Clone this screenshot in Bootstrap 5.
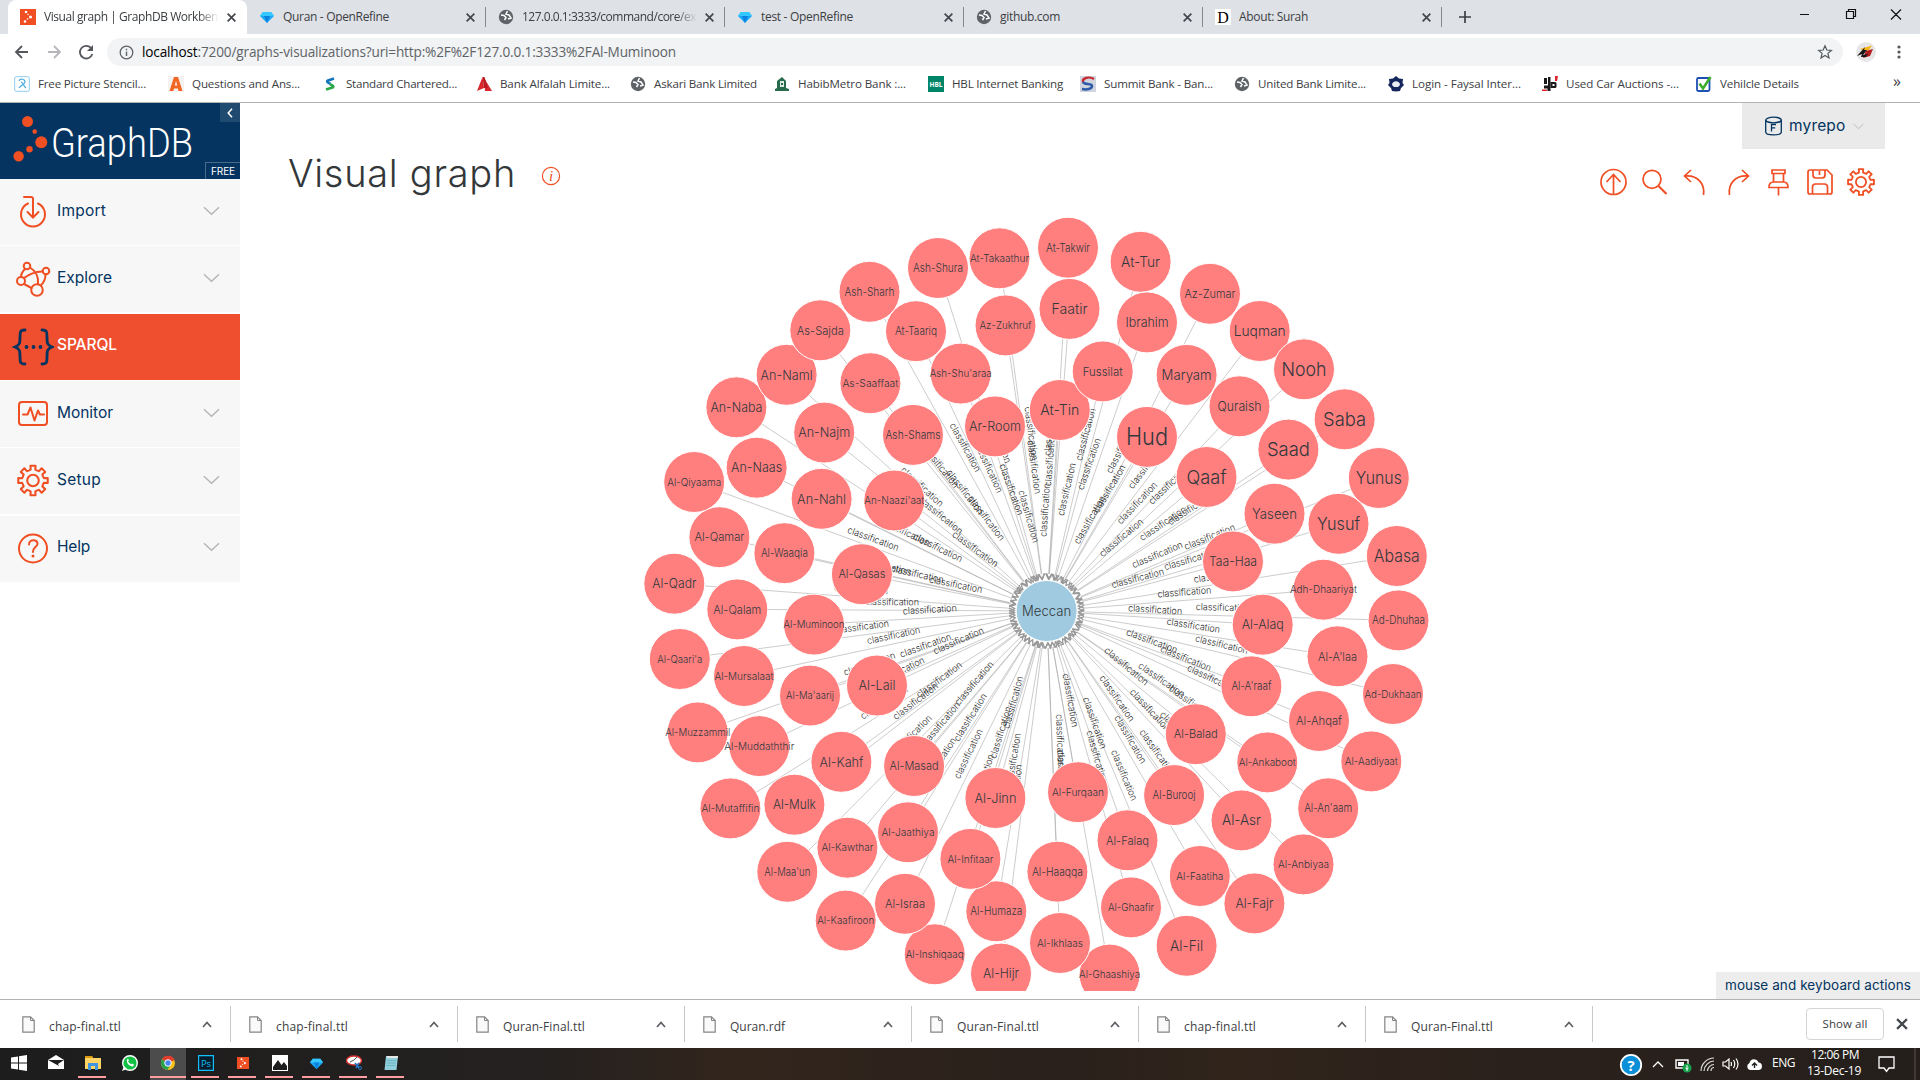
<!DOCTYPE html>
<html lang="en">
<head>
<meta charset="utf-8">
<title>Visual graph | GraphDB Workbench</title>
<link href="https://cdn.jsdelivr.net/npm/bootstrap@5.3.0/dist/css/bootstrap.min.css" rel="stylesheet">
<style>
html,body{height:1080px;overflow:hidden}
body{width:1920px;font-family:"Open Sans","Noto Sans",sans-serif;font-size:12px;line-height:1.2;color:#3c4043;background:#fff}
svg{display:block;flex:none}
.fit{white-space:nowrap;flex:none}
.tabstrip{height:34px;background:#dee1e6;padding-left:8px}
.tab-item{width:239px;padding-left:12px;position:relative}
.tab-item+.tab-item::after{content:"";position:absolute;right:0;top:7px;height:20px;border-right:1px solid #85898e}
.tab-item.on{background:#fff;border-radius:8px 8px 0 0}
.tab-title{width:175px;height:17px;overflow:hidden;margin-left:8px;padding-top:1px}
.tab-fade{-webkit-mask-image:linear-gradient(90deg,#000 88%,transparent)}
.omnirow{height:35px;padding:1px 10px 0 11px}
.omni{width:1736px;height:28px;border-radius:14px;background:#f1f3f4;padding:0 10px 0 8px;font-size:13.6px;color:#5f6368}
.bookmarks{height:34px;padding-left:14px;padding-bottom:3px;border-bottom:1px solid #b3b3b3;font-size:11.6px}
.bookmarks .fit{margin-left:8px}
.workbench{height:896px;font-family:Inter,Roboto,"Open Sans",sans-serif}
.side{width:240px}
.logo{height:76px;background:#04345f;position:relative}
.logo svg{overflow:visible}
.logo .collapser{position:absolute;right:0;top:0;width:20px;height:19px;background:#204b70}
.logo .edition{position:absolute;right:0;bottom:0;width:35px;height:17px;border:1px solid #4a6c8b;border-width:1px 0 0 1px;color:#fff;font-size:10px;line-height:17px;padding-left:5px}
.menu-item{height:66px;margin-bottom:1.35px;background:#f7f7f7;color:#04345f;font-size:15.5px;padding:0 20px 0 12px}
.menu-item .fit{margin-bottom:2px}
.menu-item.on{background:#ef4e2f;color:#fff;font-weight:500}
.page-title{font-size:38px;font-weight:300;color:#333739;line-height:46px}
.repo{width:143px;height:46px;background:#eaeaea;color:#04345f;font-size:15.5px;margin-right:35px;padding-left:22px}
.tools{margin:18px 42px 0 0}
.canvas-wrap{flex:1;position:relative}
.keys{position:absolute;right:0;bottom:0;width:204px;height:27px;background:#ededed;color:#04345f;font-size:13.5px;padding-left:9px}
.shelf{height:49px;border-top:1px solid #b3b3b3}
.dl{width:227px;height:36px;border-right:1px solid #c8c8c8;padding:0 18px 0 18px;font-size:12px}
.dl .fit{margin:6px auto 0 14px}
.showall{width:78px;height:32px;border:1px solid #d5d5d5;border-radius:4px;font-size:11.5px;color:#3c4043}
.taskbar{height:32px;background:linear-gradient(90deg,#1d1d1d 0,#242120 28%,#32251c 38%,#2a211c 55%,#30241b 64%,#2b211c 80%,#241f1c 100%);color:#fff}
.app-btn{width:37px;height:32px;position:relative}
.app-btn.run::after{content:"";position:absolute;left:4px;right:5px;bottom:2px;height:2px;background:#ff9da0}
.app-btn.front{background:#4d4c4c;width:36px;margin:0 1px 0 2px}
.app-btn.front::after{left:0;right:0}
.tray svg{position:absolute}
.tray{position:relative;width:310px;font-size:12px}
.tray span{position:absolute}
#graph text{text-anchor:middle;font-family:Inter,Roboto,"Open Sans",sans-serif;font-weight:300}
.lnk{stroke:#aaa;stroke-opacity:.6;stroke-width:1}
.tip{stroke:#999;fill:none;stroke-width:1.3}
.pred{font-size:9.6px;fill:#2b2b2b}
.disc{fill:#ff7f7f;stroke:#fff;stroke-width:1}
</style>
<script src="https://cdn.jsdelivr.net/npm/bootstrap@5.3.0/dist/js/bootstrap.bundle.min.js"></script>
</head>
<body class="d-flex flex-column">
<svg width="0" height="0" class="position-absolute">
<defs>
<symbol id="globe" viewBox="0 0 16 16"><circle cx="8" cy="8" r="7.2" fill="#5f6368"/><path d="M3 6l3 .5 2 2-1.500 2.500M9.500 2L8 5l3 1 2 3-3 1" fill="none" stroke="#fff" stroke-width="1.500"/></symbol>
<symbol id="gem" viewBox="0 0 16 16"><path d="M4 3h8l3 4-7 7-7-7z" fill="#1ba8f5"/><path d="M4 3h8l3 4H1z" fill="#35c8ff"/><path d="M8 14L5 7h6z" fill="#0b82e0"/></symbol>
<symbol id="dots" viewBox="0 0 16 16"><path fill="#f04e23" d="M0 0h16v16H0z"/><g fill="#fff"><circle cx="6" cy="3" r="1.300"/><circle cx="8" cy="5.500" r=".7"/><circle cx="10.500" cy="8" r="1.500"/><circle cx="7.500" cy="10" r=".8"/><circle cx="5" cy="12.500" r="1.300"/></g></symbol>
<symbol id="shut" viewBox="0 0 10 10"><path d="M1.500 1.500l7 7m0-7l-7 7" stroke="#45494d" stroke-width="1.600" fill="none"/></symbol>
<symbol id="dbp" viewBox="0 0 16 16"><path fill="#fff" d="M0 0h16v16H0z"/><text x="8" y="14" font-size="16" text-anchor="middle" font-family="Liberation Serif">D</text></symbol>
<symbol id="down" viewBox="0 0 18 10"><path d="M1 1l8 7.500L17 1" fill="none" stroke="#b3b3b3" stroke-width="1.400"/></symbol>
<symbol id="gear" viewBox="0 0 32 32"><path class="gearpath" fill="none" stroke="currentColor" stroke-width="2" stroke-linejoin="round"/><circle cx="16" cy="16" r="5.600" fill="none" stroke="currentColor" stroke-width="2"/></symbol>
<symbol id="b0" viewBox="0 0 16 16"><rect x=".7" y=".7" width="14.600" height="14.600" rx="1.500" fill="#fff" stroke="#8fcdec"/><path d="M5 5c1-3 6-2 6 1 0 2-4 3-6 6M7 6c3 1 2 4 5 6" fill="none" stroke="#49aede" stroke-width="1.200"/></symbol>
<symbol id="b1" viewBox="0 0 16 16"><rect width="16" height="16" fill="#f5f1ef"/><path d="M1.500 15L6 1h4l4.500 14h-4l-.6-2.500H6L5.400 15zM6.800 9.500h2.500L8 4.800z" fill="#f26522"/></symbol>
<symbol id="b2" viewBox="0 0 16 16"><path d="M12 2.500L6 4.500c-2 1 0 2.300 2.500 3.300" stroke="#1275bb" stroke-width="2.600" fill="none"/><path d="M4 13.500l6.500-2c2-1 0-2.300-2.500-3.300" stroke="#2aa84a" stroke-width="2.600" fill="none"/></symbol>
<symbol id="b3" viewBox="0 0 16 16"><path d="M6.500 1L1 15l7-3zM8 2l8 13H9z" fill="#d8262c"/><path d="M6.500 1h2L12 12l-4 0z" fill="#b91d22"/></symbol>
<symbol id="b5" viewBox="0 0 16 16"><path d="M3 5l5-4 4 4v7l3 1v2H1v-2l2-1z" fill="#276a4c"/><path d="M6 5h4v6H6z" fill="#dce9e2"/><path d="M7 7h2v2H7z" fill="#276a4c"/></symbol>
<symbol id="b6" viewBox="0 0 16 16"><path d="M0 0h16v16H0z" fill="#008568"/><text x="8" y="10.500" font-size="6.500" font-weight="700" fill="#fff" text-anchor="middle">HBL</text></symbol>
<symbol id="b7" viewBox="0 0 16 16"><path d="M0 0h16v16H0z" fill="#cfd4de"/><path d="M14 3C9 0 2 2 3 6" fill="none" stroke="#c9252b" stroke-width="2.200"/><path d="M3 6c1 3 9 1 9 4 0 3-5 4-10 3" fill="none" stroke="#2b5ba8" stroke-width="2.500"/></symbol>
<symbol id="b9" viewBox="0 0 16 16"><path d="M8 0l3 2.500 4 .5-.5 4L16 9l-3 3-1 3-4 .500-4-.500-1-3-3-3 1.500-2L1 3l4-.500z" fill="#14265c"/><path d="M4 9c0-5 8-5 8 0l-2 2H6z" fill="#e9ecf4"/></symbol>
<symbol id="b10" viewBox="0 0 16 16"><path d="M2 2h3v6H2zM6 1h2.500v14H5.500v-2.500H2V9.500h4z" fill="#191919"/><path d="M8.500 6H13q1.500 0 1.500 1.500v3Q14.500 12 13 12H8.500zM10.500 8v2h2V8z" fill="#191919" fill-rule="evenodd"/><path d="M13 0h3l-1 5h-2zM0 13.500h5V15H0z" fill="#e02229"/></symbol>
<symbol id="b11" viewBox="0 0 16 16"><rect x="1" y="2" width="12.500" height="13" rx="1.500" fill="#fff" stroke="#1c4fb4" stroke-width="1.800"/><path d="M3.500 7.500l3.500 5L14.500 1" fill="none" stroke="#3cae2c" stroke-width="2.600"/></symbol>
<symbol id="paper" viewBox="0 0 13 17"><path d="M.8.8h7.700L12.200 4.500v11.700H.8z" fill="#fafafa" stroke="#858585" stroke-width="1.200"/><path d="M8.500.8v3.700h3.700" fill="none" stroke="#858585"/></symbol>
</defs>
</svg>

<div class="tabstrip d-flex" id="tabs"></div>

<div class="omnirow d-flex align-items-center">
<svg width="96" height="20" viewBox="0 0 96 20" fill="none" stroke="#54585c" stroke-width="1.800"><path d="M17 10H5m6-6l-6 6 6 6"/><path d="M37 10h12m-6-6l6 6-6 6" stroke="#b5b7ba"/><path d="M80 6a6.300 6.300 0 1 0 1.300 6"/><path d="M82 3v6h-6z" fill="#54585c" stroke="none"/></svg>
<div class="omni d-flex align-items-center">
<svg width="15" height="15" viewBox="0 0 15 15" class="ms-1"><circle cx="7.500" cy="7.500" r="6.300" fill="none" stroke="#5f6368" stroke-width="1.300"/><path d="M7.500 6.500V11M7.500 3.700v1.600" stroke="#5f6368" stroke-width="1.400"/></svg>
<span class="fit ms-2" data-w="534"><span class="text-black">localhost</span>:7200/graphs-visualizations?uri=http:%2F%2F127.0.0.1:3333%2FAl-Muminoon</span>
<svg class="ms-auto" width="16" height="16" viewBox="0 0 16 16"><path d="M8 1.800l1.800 4.200 4.600.4-3.500 3 1.100 4.500L8 11.500l-4 2.400 1.100-4.500-3.500-3L6.200 6z" fill="none" stroke="#54585c" stroke-width="1.200"/></svg>
</div>
<svg width="20" height="20" viewBox="0 0 20 20" style="margin-left:13px"><circle cx="10" cy="10" r="10" fill="#e6e6e6"/><path d="M4 7l12-3.500-3 4.500-4 1z" fill="#f8b318"/><path d="M10 9l7-2-3 7-7 2z" fill="#b41c1c"/><path d="M1 14l8-9-1 3h3l-4 5 5-1-2 3H5l1-3z" fill="#161616"/></svg>
<svg class="ms-auto" width="4" height="16" viewBox="0 0 4 16" fill="#54585c" style="margin-right:9px"><circle cx="2" cy="3" r="1.600"/><circle cx="2" cy="8" r="1.600"/><circle cx="2" cy="13" r="1.600"/></svg>
</div>

<div class="bookmarks d-flex align-items-center" id="marks"></div>

<div class="workbench d-flex">
<nav class="side">
<div class="logo">
<svg width="204" height="76" viewBox="0 103 204 76"><g fill="#f04e23"><circle cx="27.500" cy="121.600" r="5.500"/><circle cx="34.700" cy="131.600" r="2.300"/><circle cx="41.300" cy="142.300" r="6"/><circle cx="29.500" cy="149.300" r="3.200"/><circle cx="18.600" cy="156.200" r="5.200"/></g><text x="51" y="156.500" textLength="142" lengthAdjust="spacingAndGlyphs" font-family="Roboto" font-size="41" font-weight="300" fill="#fff">GraphDB</text></svg>
<div class="collapser d-flex align-items-center justify-content-center"><svg width="6" height="10" viewBox="0 0 6 10"><path d="M5 .8L1.200 5 5 9.200" fill="none" stroke="#fff" stroke-width="1.500"/></svg></div>
<div class="edition"><span class="fit d-inline-block" data-w="24">FREE</span></div>
</div>
<div id="menu"></div>
</nav>

<main class="flex-grow-1 d-flex flex-column">
<div class="d-flex justify-content-between" style="height:102px">
<div class="d-flex align-items-center" style="padding:0 0 0 48px;height:140px">
<h1 class="page-title m-0 fit" data-w="228">Visual graph</h1>
<svg width="20" height="20" viewBox="0 0 20 20" style="margin:5px 0 0 25px"><circle cx="10" cy="10" r="8.600" fill="none" stroke="#f04e23" stroke-width="1.200"/><text x="10" y="14.800" font-size="15" font-style="italic" font-family="Liberation Serif" fill="#f04e23" text-anchor="middle">i</text></svg>
</div>
<div class="d-flex flex-column align-items-end">
<div class="repo d-flex align-items-center">
<svg width="19" height="20" viewBox="0 0 19 20" fill="none" stroke="#04345f" stroke-width="1.300"><ellipse cx="9.500" cy="4" rx="7.800" ry="2.800"/><path d="M1.700 4v12c0 3.800 15.600 3.800 15.600 0V4M7.500 15.500v-7h4.500M7.500 11.800h3.700"/></svg>
<span class="fit" style="margin-left:6px" data-w="56.500">myrepo</span>
<svg width="11" height="7" style="margin-left:7px"><use href="#down"/></svg>
</div>
<svg class="tools" width="284" height="30" viewBox="1594 167 284 30" fill="none" stroke="#f04e23" stroke-width="1.700">
<circle cx="1613.500" cy="182" r="12.500"/><path d="M1613.500 194v-19m-7 7l7-7.500 7 7.500"/>
<circle cx="1652" cy="179.300" r="9"/><path d="M1658.500 186l8 8" stroke-width="2.200"/>
<path d="M1691 170l-6.500 6 6.500 6M1685 176c14-1 20 9 18.500 19"/>
<path d="M1742 170l6.500 6-6.500 6M1748 176c-14-1-20 9-18.500 19"/>
<path d="M1772 170h13v3.500h-13zM1773.500 173.500v8.500h10v-8.500M1773.500 182c-3 0-4.500 2-4.500 5.500h19c0-3.500-1.500-5.500-4.500-5.500M1778.500 188v7.500"/>
<path d="M1810 170h17l5 5v17q0 2-2 2h-20q-2 0-2-2v-20q0-2 2-2zM1813 170v5q0 3 3 3h6q3 0 3-3v-5M1819.500 171v4M1812.500 194v-7q0-3 3-3h9q3 0 3 3v7"/>
<svg x="1846.500" y="167.500" width="29" height="29" color="#f04e23"><use href="#gear"/></svg>
</svg>
</div>
</div>
<div class="canvas-wrap">
<svg id="graph" width="1680" height="786" viewBox="240 205 1680 786"></svg>
<div class="keys d-flex align-items-center"><span class="fit" data-w="186">mouse and keyboard actions</span></div>
</div>
</main>
</div>

<div class="shelf d-flex align-items-center">
<div class="d-flex" id="shelf" style="margin-left:4px"></div>
<div class="showall d-flex align-items-center justify-content-center ms-auto"><span class="fit" data-w="45">Show all</span></div>
<svg width="14" height="14" style="margin:0 11px 0 11px"><use href="#shut"/></svg>
</div>

<div class="taskbar d-flex justify-content-between">
<div class="d-flex" id="apps"></div>
<div class="tray">
<svg style="left:9px;top:5px" width="24" height="24" viewBox="0 0 24 24"><circle cx="12" cy="12" r="10.200" fill="#0b8fd8" stroke="#fff" stroke-width="1.800"/><text x="12" y="17.500" font-size="15" font-weight="700" fill="#fff" text-anchor="middle">?</text></svg>
<svg style="left:42px;top:12px" width="12" height="8" viewBox="0 0 12 8"><path d="M1 7l5-5 5 5" fill="none" stroke="#fff" stroke-width="1.300"/></svg>
<svg style="left:65px;top:9px" width="17" height="16" viewBox="0 0 17 16"><path d="M1 3h12v8H1z" fill="none" stroke="#fff" stroke-width="1.400"/><path d="M3 5h6v4H3z" fill="#fff"/><circle cx="12" cy="11" r="4.500" fill="#15a04a"/><path d="M12 8v6M10.500 11q1.500 2 3 0" stroke="#fff" fill="none"/></svg>
<svg style="left:90px;top:9px" width="15" height="15" viewBox="0 0 15 15" fill="none" stroke="#ddd" stroke-width="1.200"><path d="M1 14C1 7 7 1 14 1M4 14c0-5 5-10 10-10M7.500 14c0-3 3-6.500 6.500-6.500M11 14c0-2 1.500-3.500 3-3.500"/></svg>
<svg style="left:112px;top:9px" width="18" height="14" viewBox="0 0 18 14" fill="none" stroke="#fff" stroke-width="1.200"><path d="M1 5h2.500L7 2v10L3.500 9H1zM9 5q1 2 0 4M11.500 3q2.500 4 0 8M14 1.500q4 5.500 0 11"/></svg>
<svg style="left:136px;top:10px" width="17" height="13" viewBox="0 0 17 13"><path d="M4 12a3.700 3.700 0 0 1-.5-7C4 0 11 0 12.500 4.500a3.800 3.800 0 0 1 .5 7.500z" fill="#fff"/><path d="M8.500 10V5M6 7.500L8.500 5 11 7.500" stroke="#222" stroke-width="1.400" fill="none"/></svg>
<span class="fit" style="left:162px;top:8px" data-w="23">ENG</span>
<span class="fit" style="left:201px;top:0" data-w="48">12:06 PM</span>
<span class="fit" style="left:197px;top:16px" data-w="54">13-Dec-19</span>
<svg style="left:268px;top:8px" width="18" height="17" viewBox="0 0 18 17"><path d="M1 1h15v11h-5l-2.500 3.500L6 12H1z" fill="none" stroke="#fff" stroke-width="1.300"/></svg>
<svg style="left:304px;top:0" width="2" height="32"><path d="M1 0v32" stroke="#5c5550"/></svg>
</div>
</div>

<script>
const el = id => document.getElementById(id);
const use = (id, s) => `<svg width="${s}" height="${s}"><use href="#${id}"/></svg>`;

el('tabs').innerHTML = [
  ['dots','Visual graph | GraphDB Workben',0],['gem','Quran - OpenRefine',106],
  ['globe','127.0.0.1:3333/command/core/ex',0],['gem','test - OpenRefine',92],
  ['globe','github.com',60],['dbp','About: Surah',69]
].map(([ic,t,w],i) => `<div class="tab-item d-flex align-items-center ${i?'':'on'}">${use(ic,16)}<div class="tab-title ${w?'':'tab-fade'}"><span class="fit d-inline-block" data-w="${w||174}">${t}</span></div><span style="margin-left:7px">${use('shut',11)}</span></div>`).join('')
+ `<svg class="align-self-center" width="14" height="14" viewBox="0 0 14 14" style="margin-left:16px"><path d="M7 1v12M1 7h12" stroke="#3c4043" stroke-width="1.700"/></svg>
<svg class="ms-auto" width="120" height="34" viewBox="1 0 120 34" fill="none" stroke="#111" stroke-width="1.200"><path d="M0 14.500h10M47.500 11.500h7v7h-7zM49.500 11.500v-2h7v7h-2M92 9.500l10 10m0-10l-10 10"/></svg>`;

el('marks').innerHTML = [
  ['b0','Free Picture Stencil...',154,108],['b1','Questions and Ans...',154,108],['b2','Standard Chartered...',154,111],
  ['b3','Bank Alfalah Limite...',154,110],['globe','Askari Bank Limited',144,103],['b5','HabibMetro Bank :...',154,108],
  ['b6','HBL Internet Banking',152,111],['b7','Summit Bank - Ban...',154,109],['globe','United Bank Limite...',154,108],
  ['b9','Login - Faysal Inter...',154,109],['b10','Used Car Auctions -...',154,113],['b11','Vehilcle Details',196,79]
].map(([ic,t,w,tw]) => `<div class="d-flex align-items-center flex-shrink-0" style="width:${w}px">${use(ic,16)}<span class="fit" data-w="${tw}">${t}</span></div>`).join('') + '<span style="font-size:16px;margin:-4px 0 0 1px">»</span>';

const O = 'fill="none" stroke="#f04e23" stroke-width="2" stroke-linecap="round"';
el('menu').innerHTML = [
  ['Import',49,`<path ${O} d="M12 4h7q2 0 2 2v18m-5.500-5l5.500 5.500 5.500-5.500M16 10.500a12 12 0 1 0 10 0"/>`],
  ['Explore',55,`<g ${O}><circle cx="15" cy="6" r="3.300"/><circle cx="34" cy="11" r="3.300"/><circle cx="9" cy="21" r="4"/><circle cx="25" cy="30" r="5.800"/><path d="M13 9q-4 4-4 8M12 18q8-6 18-6.500M18 7.500Q27 13 26 24M33.500 14.500q0 7-5 11M12 24l7.500 4"/></g>`],
  ['SPARQL',60,`<g fill="none" stroke="#04345f" stroke-width="2.800" stroke-linecap="round"><path d="M13 2c-5 0-5 2-5 7 0 6 0 8-5 10 5 2 5 4 5 10 0 5 0 7 5 7M30 2c5 0 5 2 5 7 0 6 0 8 5 10-5 2-5 4-5 10 0 5 0 7-5 7"/></g><g fill="#04345f"><circle cx="14.500" cy="19" r="1.900"/><circle cx="21.500" cy="19" r="1.900"/><circle cx="28.500" cy="19" r="1.900"/></g>`],
  ['Monitor',56,`<g ${O} stroke-linejoin="round"><rect x="7" y="7" width="28" height="23" rx="3"/><path d="M11 19.500h4.500l3-7 4 13 3.500-10 2 4h4"/></g>`],
  ['Setup',44,`<svg x="4.500" y="2" width="33" height="33" color="#f04e23"><use href="#gear"/></svg>`],
  ['Help',33,`<circle ${O} cx="21" cy="18.500" r="14"/><path ${O} d="M17 14.500c0-6 9-5.500 8.500-.5-.3 3-4.500 3-4.500 8"/><circle cx="21" cy="26" r="1.500" fill="#f04e23"/>`]
].map(([t,w,s]) => `<div class="menu-item d-flex align-items-center ${t=='SPARQL'?'on':''}"><svg width="42" height="38" viewBox="0 0 42 38">${s}</svg><span class="fit" style="margin-left:3px" data-w="${w}">${t}</span>${t=='SPARQL'?'':'<svg class="ms-auto" width="17" height="10" style="margin-bottom:3px"><use href="#down"/></svg>'}</div>`).join('');

el('shelf').innerHTML = [['chap-final.ttl',72],['chap-final.ttl',72],['Quran-Final.ttl',82],['Quran.rdf',55],['Quran-Final.ttl',82],['chap-final.ttl',72],['Quran-Final.ttl',82]]
.map(([t,w]) => `<div class="dl d-flex align-items-center"><svg width="13" height="17"><use href="#paper"/></svg><span class="fit" data-w="${w}">${t}</span><svg width="10" height="7" viewBox="0 0 10 7"><path d="M1 6l4-4.500L9 6" fill="none" stroke="#5b5f63" stroke-width="1.700"/></svg></div>`).join('');

el('apps').innerHTML = [
  ['','<path d="M0 2.500L7 1.500v6H0zM8 1.300L16 0v7.500H8zM0 8.500h7v6l-7-1zM8 8.500h8V16l-8-1.300z" fill="#fff"/>'],
  ['','<path d="M0 5l8-5 8 5v9H0z" fill="#fff"/><path d="M0 5l16 0-6 4 1 2z" fill="#1d1d1d"/>'],
  ['run','<path d="M0 1h7l1 2h8v11H0z" fill="#fcd364"/><path d="M0 1h7l1 2H0z" fill="#dc9b10"/><path d="M3 8h10v7h-3v-4H6v4H3z" fill="#3f95e0"/>'],
  ['','<circle cx="8" cy="8" r="7.300" fill="#12c143" stroke="#fff" stroke-width="1.400"/><path d="M0 16l2-5 3 3z" fill="#fff"/><path d="M5 4.500c-1 3 2 7 6 7l1-2-2-1-1 1-3-3 1-1-1-2z" fill="#fff"/>'],
  ['run front','<circle cx="8" cy="8" r="7" fill="#fbc116"/><path d="M8 8L2 4.300A7 7 0 0 1 14.500 5z" fill="#e33b2e"/><path d="M8 8L2 4.300A7 7 0 0 0 7.500 15l3-5z" fill="#2ba24c"/><circle cx="8" cy="8" r="3.300" fill="#4a84f0" stroke="#fff"/>'],
  ['run','<path d="M.6.6h14.800v14.800H.6z" fill="#071d2c" stroke="#10c0ff" stroke-width="1.200"/><text x="8" y="11.500" font-size="9.500" fill="#10c0ff" text-anchor="middle">Ps</text>'],
  ['run','<svg x="2" y="2" width="12" height="12"><use href="#dots"/></svg>'],
  ['run','<path d="M0 0h16v16H0z" fill="#fff"/><path d="M1 12l5-7 3.500 5L12 7l3 4v4H1z" fill="#1d1d1d"/>'],
  ['run','<use href="#gem" width="15" height="17"/>'],
  ['run','<ellipse cx="8" cy="5.500" rx="7.500" ry="4.500" fill="#fff" stroke="#d32f2f" stroke-width="1.400"/><path d="M8 5l3-3M4 7l4-2" stroke="#555"/><path d="M9 8l4 5m0-5l-3 5" stroke="#2377c5" stroke-width="1.600"/><circle cx="14" cy="13" r="1.500" fill="none" stroke="#2377c5"/>'],
  ['run','<path d="M3 1h12l-1.500 14H1.500z" fill="#8fd0dc"/><path d="M4 1h11v2H4z" fill="#e6e6e6"/><path d="M4 5.500h9M4 8h9M3.500 10.500h9" stroke="#5fa9b8" stroke-width=".7"/>']
].map(([c,s]) => `<div class="app-btn ${c} d-flex justify-content-center" style="padding-top:7px"><svg width="16" height="16" viewBox="0 0 16 16">${s}</svg></div>`).join('');

/* eight-tooth cog outline */
let g = '';
for (let i = 0; i < 8; i++) [[-.42,10.500],[-.21,10.800],[-.17,14.500],[.17,14.500],[.21,10.800]].forEach(([o,r]) => {
  const a = i*Math.PI/4 + o;
  g += (g ? 'L' : 'M') + (16+r*Math.sin(a)).toFixed(2) + ' ' + (16-r*Math.cos(a)).toFixed(2);
});
document.querySelector('.gearpath').setAttribute('d', g + 'Z');

/* name, x, y, label width */
const hub = [1046.6, 611];
const nodes = [
["At-Takaathur",999.5,258.3,59],["Ash-Shura",938,268,50],["Ash-Sharh",869.5,291.8,50],["As-Sajda",820.3,330.3,47],["At-Taariq",916,331.2,42],["Az-Zukhruf",1005.5,325.4,52],["Ash-Shu'araa",960.7,373.6,62],["An-Naml",786.6,374.8,52],["As-Saaffaat",870.4,383.2,56],["An-Naba",736.4,407.3,52],["An-Najm",824.2,432.6,52],["Ash-Shams",913,434.9,55],["Ar-Room",995,426.4,52],["An-Naas",756.6,467.7,51],["Al-Qiyaama",694.2,482,54],["An-Nahl",821.6,498.8,49],["An-Naazi'aat",894.3,500.5,60],["Al-Qamar",719.4,537.2,50],["Al-Waaqia",784.4,553.2,47],["Al-Qasas",861.9,574.2,47],["Al-Qadr",674.3,583.7,44],
["At-Takwir",1068,247.7,44],["At-Tur",1140.6,261.8,39],["Faatir",1069.5,308.9,36],["Ibrahim",1147,322.4,43],["Az-Zumar",1210,293.8,51],["Luqman",1259.7,331,52],["Fussilat",1102.7,371.4,40],["Maryam",1186.6,374.9,50],["At-Tin",1059.8,410,39],["Quraish",1239.5,406.3,44],["Nooh",1304,369.3,45],["Hud",1147,436.9,42],["Qaaf",1206.5,477,40],["Saad",1288.4,449.6,43],["Saba",1344.6,419.3,43],["Yunus",1378.8,478,46],["Yaseen",1274.5,513.7,45],["Yusuf",1338.5,523.8,43],["Taa-Haa",1233,561.4,48],["Abasa",1396.8,556,46],["Adh-Dhaariyat",1323.4,589.7,67],
["Al-Qalam",737.3,609.4,48],["Al-Muminoon",814,624.6,61],["Al-Qaari'a",679.8,659,45],["Al-Mursalaat",744,676,59],["Al-Ma'aarij",810,695.6,48],["Al-Lail",877,685.5,37],["Al-Muzzammil",697.7,732.4,65],["Al-Muddaththir",759.3,746.1,70],["Al-Kahf",841.4,761.8,44],["Al-Masad",914.1,766,49],["Al-Jinn",995.4,798,42],["Al-Mutaffifin",730.4,808.4,58],["Al-Mulk",794.4,804.7,43],["Al-Jaathiya",908,832.3,53],["Al-Kawthar",847.4,847.7,52],["Al-Infitaar",970.4,858.9,46],["Al-Maa'un",787.3,871.8,46],["Al-Israa",905,903.8,40],["Al-Humaza",996.3,911.3,52],["Al-Kaafiroon",845.7,920.6,57],["Al-Inshiqaaq",934.7,954.3,58],["Al-Hijr",1001,973.6,36],
["Al-Furqaan",1078,792.2,52],["Al-Haaqqa",1057.4,871.7,51],["Al-Ikhlaas",1060,943,46],["Al-Ghaashiya",1109.6,974.6,61],["Al-Falaq",1127.5,840.3,43],["Al-Burooj",1174.1,795.1,43],["Al-Ghaafir",1131,907.4,46],["Al-Fil",1186.6,945.8,33],["Al-Faatiha",1199.8,876,47],["Al-Fajr",1254.4,903.4,38],["Al-Asr",1241.5,820.4,39],["Al-Balad",1195.8,734.2,44],["Al-Anbiyaa",1303.5,864.4,51],["Al-An'aam",1328.2,808.3,48],["Al-Ankaboot",1267.3,762.4,57],["Al-Aadiyaat",1371.3,761.4,53],["Al-Ahqaf",1319,721,46],["Al-A'raaf",1251.4,686.3,40],["Ad-Dukhaan",1393,694,57],["Al-A'laa",1337.5,656.3,39],["Al-Alaq",1262.7,624.7,42],["Ad-Dhuhaa",1398.5,620.4,53]
].sort((a,b) => a[0] < b[0] ? -1 : 1);
const sizes = {3:23.5,4:19,5:17,6:14.5,7:13.5,8:12.2,9:11};
let lines = '', tips = '', preds = '', discs = '';
for (const [n,x,y,w] of nodes) {
  const dx = x-hub[0], dy = y-hub[1], d = Math.hypot(dx,dy), a = Math.atan2(dy,dx)*180/Math.PI;
  const up = Math.abs(a) > 90 ? a-180 : a;
  lines += `<path class="lnk" d="M${x} ${y}L${hub[0]+dx/d*37} ${hub[1]+dy/d*37}"/>`;
  tips += `<path class="tip" transform="translate(${hub}) rotate(${a})" d="M37.500 -3L32 0L37.500 3"/>`;
  preds += `<text class="pred" textLength="54" lengthAdjust="spacingAndGlyphs" transform="translate(${hub[0]+dx/2} ${hub[1]+dy/2}) rotate(${up})" y="-5">classification</text>`;
  const fs = sizes[n.length] || 10.5;
  discs += `<circle class="disc" cx="${x}" cy="${y}" r="30.500"/><text x="${x}" y="${y+fs*.35}" font-size="${fs}" textLength="${w}" lengthAdjust="spacingAndGlyphs" fill="#33383c">${n}</text>`;
}
el('graph').innerHTML = lines + tips + preds + discs +
 `<circle cx="${hub[0]}" cy="${hub[1]}" r="30.500" fill="#a0cadf" stroke="#fff"/><text x="${hub[0]}" y="616" font-size="14" textLength="49" lengthAdjust="spacingAndGlyphs" fill="#33383c">Meccan</text>`;

/* track each label to its nominal width */
document.querySelectorAll('.fit[data-w]').forEach(e => {
  const r = e.getBoundingClientRect().width;
  e.style.letterSpacing = ((+e.dataset.w - r) / e.textContent.length) + 'px';
});
</script>
</body>
</html>
